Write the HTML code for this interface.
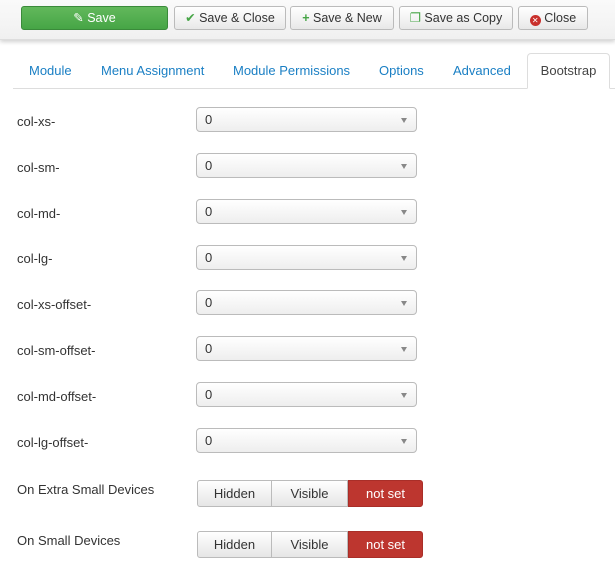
<!DOCTYPE html>
<html><head><style>
*{box-sizing:border-box;margin:0;padding:0}
body{width:615px;height:566px;overflow:hidden;background:#fff;font-family:"Liberation Sans",sans-serif;font-size:13px;color:#333;position:relative}
.tb{position:absolute;left:0;top:0;width:615px;height:40px;background:linear-gradient(#fafafa,#f0f0f0);box-shadow:0 2px 4px rgba(0,0,0,.18);border-bottom:1px solid #ddd}
.b{position:absolute;top:6px;height:24px;border:1px solid #bbb;border-radius:3px;background:linear-gradient(#fff,#e8e8e8);font-size:12.5px;line-height:22px;text-align:center;color:#333}
.save{background:linear-gradient(#62b85b,#46a546);border-color:#3a8a3a;color:#fff}
.tabs{position:absolute;left:13px;top:53px;width:602px;height:36px;border-bottom:1px solid #ddd}
.t{position:absolute;top:10px;color:#1a7fc4;font-size:13px}
.act{position:absolute;left:514px;top:0;width:83px;height:36px;border:1px solid #ddd;border-bottom:1px solid #fff;border-radius:4px 4px 0 0;background:#fff;color:#444;text-align:center;line-height:34px}
.l{position:absolute;left:17px;font-size:13px}
.s{position:absolute;left:196px;width:221px;height:25px;border:1px solid #bbb;border-radius:4px;background:linear-gradient(#fff,#eee);font-size:13px;line-height:23px;padding-left:8px}
.s:after{content:"";position:absolute;right:9px;top:10px;border-left:3px solid transparent;border-right:3px solid transparent;border-top:5px solid #888}
.g{position:absolute;left:197px;width:226px;height:27px;display:flex}
.g div{border:1px solid #bbb;background:linear-gradient(#fff,#e6e6e6);line-height:25px;text-align:center;font-size:13px}
.g .h{width:75px;border-radius:3px 0 0 3px}
.g .v{width:76px;border-left:none}
.g .n{width:75px;background:#bd362f;border-color:#a92e28;color:#fff;border-radius:0 3px 3px 0}
</style></head><body>
<div class="tb">
<div class="b save" style="left:21px;width:147px"><b style="font-weight:normal">&#9998;&nbsp;</b>Save</div>
<div class="b" style="left:174px;width:112px"><span style="color:#46a546">&#10004;</span> Save &amp; Close</div>
<div class="b" style="left:290px;width:104px"><span style="color:#46a546;font-weight:bold">+</span> Save &amp; New</div>
<div class="b" style="left:399px;width:114px"><span style="color:#46a546">&#10064;</span> Save as Copy</div>
<div class="b" style="left:518px;width:70px"><span style="display:inline-block;width:11px;height:11px;border-radius:50%;background:#c9302c;color:#fff;font-size:8px;line-height:11px;vertical-align:-1px">&#10005;</span> Close</div>
</div>
<div class="tabs">
<span class="t" style="left:16px">Module</span>
<span class="t" style="left:88px">Menu Assignment</span>
<span class="t" style="left:220px">Module Permissions</span>
<span class="t" style="left:366px">Options</span>
<span class="t" style="left:440px">Advanced</span>
<div class="act">Bootstrap</div>
</div>
<div class="l" style="top:114px">col-xs-</div><div class="s" style="top:107px">0</div>
<div class="l" style="top:160px">col-sm-</div><div class="s" style="top:153px">0</div>
<div class="l" style="top:206px">col-md-</div><div class="s" style="top:199px">0</div>
<div class="l" style="top:251px">col-lg-</div><div class="s" style="top:245px">0</div>
<div class="l" style="top:297px">col-xs-offset-</div><div class="s" style="top:290px">0</div>
<div class="l" style="top:343px">col-sm-offset-</div><div class="s" style="top:336px">0</div>
<div class="l" style="top:389px">col-md-offset-</div><div class="s" style="top:382px">0</div>
<div class="l" style="top:435px">col-lg-offset-</div><div class="s" style="top:428px">0</div>
<div class="l" style="top:482px">On Extra Small Devices</div>
<div class="g" style="top:480px"><div class="h">Hidden</div><div class="v">Visible</div><div class="n">not set</div></div>
<div class="l" style="top:533px">On Small Devices</div>
<div class="g" style="top:531px"><div class="h">Hidden</div><div class="v">Visible</div><div class="n">not set</div></div>
</body></html>
